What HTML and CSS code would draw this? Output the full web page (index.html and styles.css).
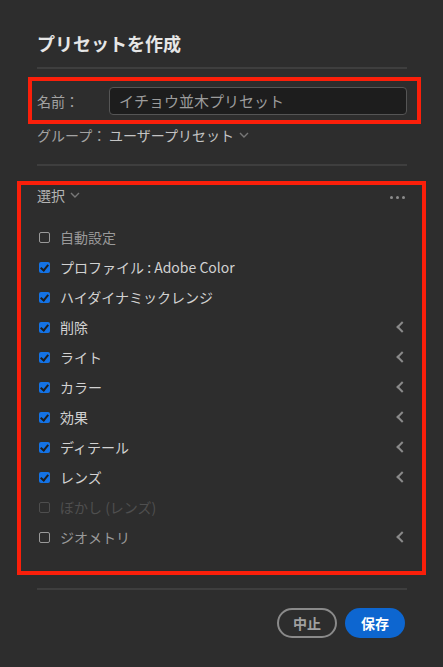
FILE: index.html
```html
<!DOCTYPE html>
<html lang="ja">

<head>
    <meta charset="UTF-8" />
    <title>プリセットを作成</title>
    <link rel="stylesheet" href="styles.css">
</head>

<body>
    <div class="dialog">
        <h1 class="title">プリセットを作成</h1>
        <div class="rule"></div>

        <div class="mark mark-name">
            <div class="field">
                <span class="label">名前：</span>
                <div class="input">イチョウ並木プリセット</div>
            </div>
        </div>
        <div class="field group">
            <span class="label">グループ：</span>
            <span class="select">ユーザープリセット
                <svg class="caret" width="10" height="6" viewBox="0 0 10 6"><path d="M1 1l4 4 4-4" fill="none" stroke="#777" stroke-width="1.4"/></svg>
            </span>
        </div>
        <div class="rule rule-2"></div>

        <div class="mark mark-list">
            <div class="list-head">
                <span class="select head">選択
                    <svg class="caret" width="10" height="6" viewBox="0 0 10 6"><path d="M1 1l4 4 4-4" fill="none" stroke="#777" stroke-width="1.4"/></svg>
                </span>
                <span class="dots"><i></i><i></i><i></i></span>
            </div>
            <ul class="items">
                <li class="item off"><span class="box"></span><span class="text">自動設定</span></li>
                <li class="item"><span class="box on"></span><span class="text">プロファイル : Adobe Color</span></li>
                <li class="item"><span class="box on"></span><span class="text">ハイダイナミックレンジ</span></li>
                <li class="item"><span class="box on"></span><span class="text">削除</span><span class="arrow"></span></li>
                <li class="item"><span class="box on"></span><span class="text">ライト</span><span class="arrow"></span></li>
                <li class="item"><span class="box on"></span><span class="text">カラー</span><span class="arrow"></span></li>
                <li class="item"><span class="box on"></span><span class="text">効果</span><span class="arrow"></span></li>
                <li class="item"><span class="box on"></span><span class="text">ディテール</span><span class="arrow"></span></li>
                <li class="item"><span class="box on"></span><span class="text">レンズ</span><span class="arrow"></span></li>
                <li class="item disabled"><span class="box"></span><span class="text">ぼかし (レンズ)</span></li>
                <li class="item off"><span class="box"></span><span class="text">ジオメトリ</span><span class="arrow"></span></li>
            </ul>
        </div>

        <div class="rule rule-3"></div>
        <div class="buttons">
            <button class="btn cancel">中止</button>
            <button class="btn save">保存</button>
        </div>
    </div>
</body>

</html>
```

FILE: styles.css
```css
* {
    margin: 0;
    padding: 0;
    box-sizing: border-box;
}

body {
    background-color: #2d2d2d;
    font-family: "Noto Sans CJK JP", "Noto Sans", sans-serif;
    font-size: 14px;
    color: #cfcfcf;
}

.dialog {
    padding: 31px 36px 0 37px;
}

.title {
    font-size: 18px;
    font-weight: bold;
    line-height: 24px;
    color: #e6e6e6;
}

.rule {
    height: 2px;
    background-color: #3e3e3e;
    margin-top: 12px;
}

.rule-2 {
    margin-top: 18px;
}

.rule-3 {
    margin-top: 13px;
}

/* red annotation frames */
.mark {
    border: 4px solid #fa1f0a;
}

.mark-name {
    margin: 8px -14px 0 -9px;
    padding: 6px 10px 5px 5px;
}

.mark-list {
    margin: 15px -19px 0 -20px;
    padding: 0 15px 19px 16px;
}

.field {
    display: flex;
    align-items: center;
    height: 28px;
}

.label {
    width: 72px;
    color: #a3a3a3;
}

.input {
    flex: 1;
    height: 28px;
    line-height: 26px;
    padding-left: 9px;
    background-color: #1d1d1d;
    border: 1px solid #555;
    border-radius: 4px;
    color: #9c9c9c;
    font-size: 15px;
}

.group {
    height: 22px;
}

.select {
    display: flex;
    align-items: center;
    color: #c4c4c4;
}

.caret {
    margin-left: 5px;
}

.list-head {
    display: flex;
    align-items: center;
    justify-content: space-between;
    height: 20px;
}

.head {
    color: #b4b4b4;
}

.dots {
    display: flex;
    gap: 3px;
    padding-right: 2px;
    margin-top: 4px;
}

.dots i {
    width: 3px;
    height: 3px;
    border-radius: 50%;
    background-color: #8c8c8c;
}

.items {
    list-style: none;
    margin-top: 17px;
}

.item {
    display: flex;
    align-items: center;
    height: 30px;
    padding-left: 2px;
}

.box {
    width: 11px;
    height: 11px;
    border: 1.5px solid #9a9a9a;
    border-radius: 2px;
    margin-right: 10px;
}

.box.on {
    border: none;
    background-color: #1473e6;
    position: relative;
}

.box.on::after {
    content: "";
    position: absolute;
    left: 3px;
    top: 1px;
    width: 3px;
    height: 6px;
    border-right: 2px solid #1e1e1e;
    border-bottom: 2px solid #1e1e1e;
    transform: rotate(40deg);
}

.text {
    flex: 1;
    color: #d2d2d2;
}

.off .text {
    color: #9a9a9a;
}

.disabled .box {
    border-color: #4e4e4e;
}

.disabled .text {
    color: #4f4f4f;
}

.arrow {
    width: 8px;
    height: 8px;
    border-left: 2px solid #8a8a8a;
    border-bottom: 2px solid #8a8a8a;
    transform: rotate(45deg);
    margin-right: 1px;
}

.buttons {
    display: flex;
    justify-content: flex-end;
    gap: 8px;
    margin-top: 18px;
    padding-right: 2px;
}

.btn {
    height: 30px;
    width: 60px;
    border-radius: 15px;
    font-family: "Noto Sans CJK JP", "Noto Sans", sans-serif;
    font-size: 14px;
    font-weight: bold;
}

.cancel {
    background: none;
    border: 2px solid #8a8a8a;
    color: #a0a0a0;
}

.save {
    border: none;
    background-color: #0d66d0;
    color: #fff;
}
```
